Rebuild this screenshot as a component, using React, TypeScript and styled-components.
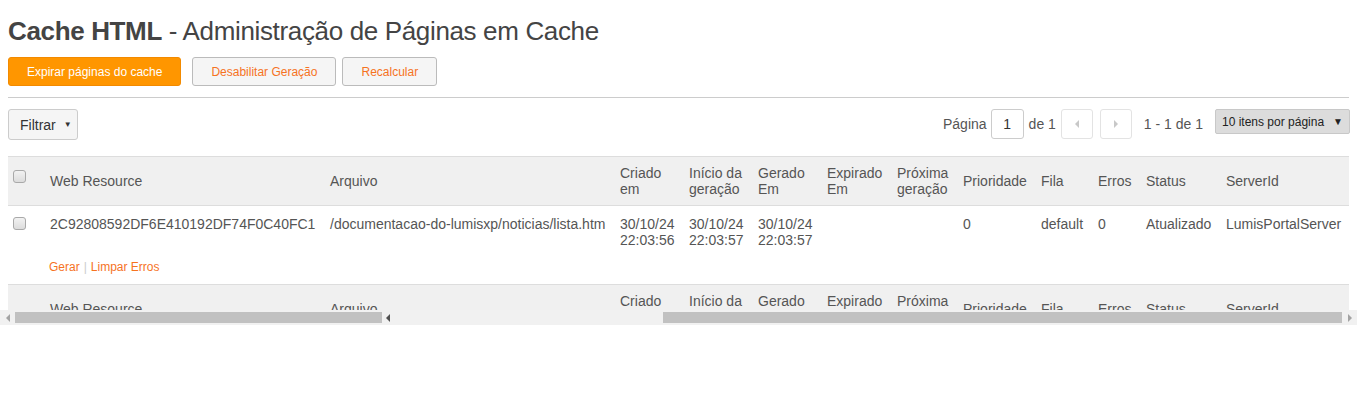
import React from 'react'
import styled, { createGlobalStyle } from 'styled-components'

const GlobalStyle = createGlobalStyle`
  html, body {
    margin: 0;
    padding: 0;
    background: #fff;
    font-family: "Liberation Sans", Arial, sans-serif;
    color: #555;
  }
`

const Page = styled.div`
  padding: 14px 8px 0 8px;
`

const Title = styled.h1`
  margin: 0;
  font-size: 26px;
  line-height: 34px;
  font-weight: normal;
  color: #444;
  letter-spacing: -0.35px;

  b {
    font-weight: bold;
  }
`

const Actions = styled.div`
  display: flex;
  margin-top: 9px;
`

const ActionButton = styled.button<{ $primary?: boolean; $gap: number }>`
  height: 29px;
  padding: 0 18px;
  margin-left: ${(p) => p.$gap}px;
  font-family: "Liberation Sans", Arial, sans-serif;
  font-size: 12px;
  border-radius: 3px;
  cursor: pointer;
  background: ${(p) => (p.$primary ? '#ff9600' : '#f5f5f5')};
  border: 1px solid ${(p) => (p.$primary ? '#f28a00' : '#bbb')};
  color: ${(p) => (p.$primary ? '#fff' : '#f6731f')};
`

const Rule = styled.hr`
  margin: 11px 0 0 0;
  border: none;
  border-top: 1px solid #ccc;
  height: 0;
`

const ToolRow = styled.div`
  display: flex;
  justify-content: space-between;
  align-items: flex-start;
  margin-top: 11px;
`

const FilterButton = styled.button`
  height: 31px;
  width: 70px;
  padding: 0 0 0 11px;
  display: flex;
  align-items: center;
  gap: 8px;
  background: #f5f5f5;
  border: 1px solid #ccc;
  border-radius: 3px;
  font-family: "Liberation Sans", Arial, sans-serif;
  font-size: 14px;
  color: #333;

  span.caret {
    font-size: 8px;
  }
`

const Pager = styled.div`
  display: flex;
  align-items: center;
  margin-right: -1px;
  font-size: 14px;
  color: #555;
  height: 30px;
`

const PageInput = styled.div`
  width: 31px;
  height: 28px;
  margin: 0 5px 0 4px;
  border: 1px solid #ccc;
  border-radius: 3px;
  display: flex;
  align-items: center;
  justify-content: center;
  color: #333;
`

const NavButton = styled.div<{ $gap: number }>`
  width: 30px;
  height: 28px;
  margin-left: ${(p) => p.$gap}px;
  border: 1px solid #e3e3e3;
  border-radius: 3px;
  display: flex;
  align-items: center;
  justify-content: center;
`

const Count = styled.span`
  margin: 0 12px;
`

const PerPage = styled.div`
  align-self: flex-start;
  height: 23px;
  background: #dcdcdc;
  border: 1px solid #c8c8c8;
  border-radius: 2px;
  display: flex;
  align-items: center;
  justify-content: space-between;
  padding: 0 6px 0 6px;
  box-sizing: content-box;
  width: 121px;
  font-size: 12px;
  color: #222;

  span.caret {
    font-size: 10px;
  }
`

const TableClip = styled.div`
  margin-top: 16px;
  height: 154px;
  overflow: hidden;
`

const Table = styled.table`
  width: 1341px;
  border-collapse: collapse;
  table-layout: fixed;
  font-size: 14px;
  line-height: 16px;
  color: #555;
`

const HeadRow = styled.tr`
  background: #f0f0f0;
  border-top: 1px solid #ddd;
  border-bottom: 1px solid #ddd;
`

const Th = styled.th`
  font-weight: normal;
  text-align: left;
  vertical-align: middle;
  padding: 8px 7px;
`

const CheckTh = styled.th`
  padding: 0;
  vertical-align: top;
`

const Td = styled.td`
  vertical-align: top;
  padding: 10px 7px 4px 7px;
  white-space: nowrap;
`

const CheckTd = styled.td`
  padding: 0;
  vertical-align: top;
`

const LinkRow = styled.tr`
  border-bottom: 1px solid #ddd;
`

const LinkCell = styled.td`
  padding: 8px 6px 10px 6px;
  font-size: 12px;
  line-height: 14px;

  a {
    color: #f6731f;
    text-decoration: none;
  }
  span {
    color: #ccc;
    margin: 0 4px;
  }
`

const Check = styled.span<{ $offset: number }>`
  display: block;
  width: 11px;
  height: 11px;
  margin: ${(p) => p.$offset}px 0 0 5px;
  border: 1px solid #a9a9a9;
  border-radius: 3px;
  background: linear-gradient(#f2f2f2, #dcdcdc);
`

const ScrollBar = styled.div`
  display: flex;
  align-items: center;
  height: 15px;
  background: #f1f1f1;
`

const Thumb = styled.div<{ $w: number }>`
  width: ${(p) => p.$w}px;
  height: 11px;
  background: #c1c1c1;
`

const Arrow = styled.div<{ $dir: 'l' | 'r'; $dark?: boolean; $w: number }>`
  width: ${(p) => p.$w}px;
  display: flex;
  justify-content: center;
  &::before {
    content: '';
    border-top: 4px solid transparent;
    border-bottom: 4px solid transparent;
    ${(p) =>
      p.$dir === 'l'
        ? `border-right: 4px solid ${p.$dark ? '#505050' : '#a3a3a3'};`
        : `border-left: 4px solid ${p.$dark ? '#505050' : '#a3a3a3'};`}
  }
`

const Spacer = styled.div<{ $w: number }>`
  width: ${(p) => p.$w}px;
`

const widths = [35, 280, 290, 69, 69, 69, 70, 66, 78, 57, 48, 80, 130]

const headers: React.ReactNode[] = [
  'Web Resource',
  'Arquivo',
  <>Criado<br />em</>,
  <>Início da<br />geração</>,
  <>Gerado<br />Em</>,
  <>Expirado<br />Em</>,
  <>Próxima<br />geração</>,
  'Prioridade',
  'Fila',
  'Erros',
  'Status',
  'ServerId',
]

const row: React.ReactNode[] = [
  '2C92808592DF6E410192DF74F0C40FC1',
  '/documentacao-do-lumisxp/noticias/lista.htm',
  <>30/10/24<br />22:03:56</>,
  <>30/10/24<br />22:03:57</>,
  <>30/10/24<br />22:03:57</>,
  '',
  '',
  '0',
  'default',
  '0',
  'Atualizado',
  'LumisPortalServer',
]

const Header = ({ withCheck }: { withCheck?: boolean }) => (
  <HeadRow>
    <CheckTh>{withCheck && <Check $offset={13} />}</CheckTh>
    {headers.map((h, i) => (
      <Th key={i}>{h}</Th>
    ))}
  </HeadRow>
)

const Triangle = ({ dir }: { dir: 'l' | 'r' }) => (
  <svg width="6" height="10" viewBox="0 0 6 10">
    <path d={dir === 'l' ? 'M5 1 L1 5 L5 9 Z' : 'M1 1 L5 5 L1 9 Z'} fill="#c8c8c8" />
  </svg>
)

const App = () => {
  return (
    <>
      <GlobalStyle />
      <Page>
        <Title>
          <b>Cache HTML</b> - Administração de Páginas em Cache
        </Title>
        <Actions>
          <ActionButton $primary $gap={0}>Expirar páginas do cache</ActionButton>
          <ActionButton $gap={11}>Desabilitar Geração</ActionButton>
          <ActionButton $gap={6}>Recalcular</ActionButton>
        </Actions>
        <Rule />
        <ToolRow>
          <FilterButton>
            Filtrar <span className="caret">▼</span>
          </FilterButton>
          <Pager>
            Página
            <PageInput>1</PageInput>
            de 1
            <NavButton $gap={5}>
              <Triangle dir="l" />
            </NavButton>
            <NavButton $gap={7}>
              <Triangle dir="r" />
            </NavButton>
            <Count>1 - 1 de 1</Count>
            <PerPage>
              10 itens por página <span className="caret">▼</span>
            </PerPage>
          </Pager>
        </ToolRow>
        <TableClip>
          <Table>
            <colgroup>
              {widths.map((w, i) => (
                <col key={i} style={{ width: w }} />
              ))}
            </colgroup>
            <thead>
              <Header withCheck />
            </thead>
            <tbody>
              <tr>
                <CheckTd>
                  <Check $offset={11} />
                </CheckTd>
                {row.map((c, i) => (
                  <Td key={i}>{c}</Td>
                ))}
              </tr>
              <LinkRow>
                <td />
                <LinkCell colSpan={12}>
                  <a href="#">Gerar</a>
                  <span>|</span>
                  <a href="#">Limpar Erros</a>
                </LinkCell>
              </LinkRow>
            </tbody>
            <tfoot>
              <Header />
            </tfoot>
          </Table>
        </TableClip>
      </Page>
      <ScrollBar>
        <Arrow $dir="l" $w={15} />
        <Thumb $w={367} />
        <Arrow $dir="l" $dark $w={12} />
        <Spacer $w={269} />
        <Thumb $w={679} />
        <Arrow $dir="r" $w={15} />
      </ScrollBar>
    </>
  )
}

export default App
